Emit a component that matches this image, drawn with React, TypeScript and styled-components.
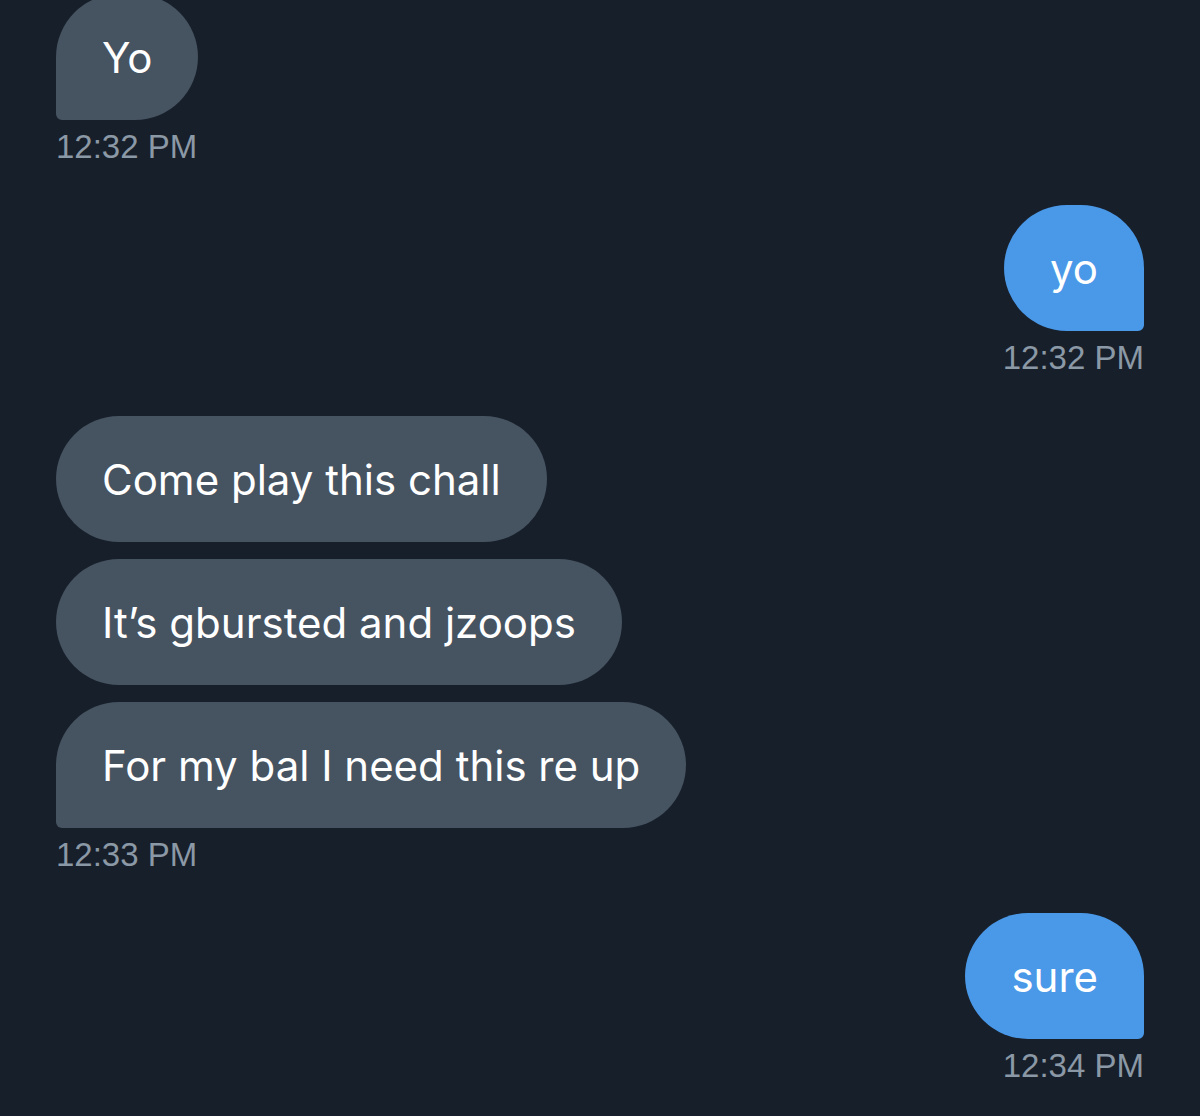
import React from "react";
import styled, { createGlobalStyle } from "styled-components";

const Global = createGlobalStyle`
  html, body { margin: 0; padding: 0; background: #171f2a; }
  body { overflow: hidden; }
`;

const Page = styled.div`
  width: 1200px;
  height: 1116px;
  background: #171f2a;
  overflow: hidden;
  box-sizing: border-box;
  padding: 0 56px;
`;

const Thread = styled.div`
  display: flex;
  flex-direction: column;
  margin-top: -6px;
  gap: 40px;
`;

const Group = styled.div<{ $mine?: boolean }>`
  display: flex;
  flex-direction: column;
  align-items: ${(p) => (p.$mine ? "flex-end" : "flex-start")};
  gap: 17px;
`;

const Bubble = styled.div<{ $mine?: boolean; $tail?: boolean }>`
  box-sizing: border-box;
  height: 126px;
  display: flex;
  align-items: center;
  padding: 0 46px;
  border-radius: 63px;
  ${(p) =>
    p.$tail
      ? p.$mine
        ? "border-bottom-right-radius: 6px;"
        : "border-bottom-left-radius: 6px;"
      : ""}
  background: ${(p) => (p.$mine ? "#4a98e8" : "#465361")};
  color: #ffffff;
  font-family: Inter, "Noto Sans", sans-serif;
  font-size: 42px;
  white-space: nowrap;
`;

const Time = styled.div`
  margin-top: -8px;
  font-family: "Liberation Sans", Arial, sans-serif;
  font-size: 33px;
  line-height: 36px;
  color: #8b98a5;
`;

type Msg = { mine: boolean; texts: string[]; time: string };

const messages: Msg[] = [
  { mine: false, texts: ["Yo"], time: "12:32 PM" },
  { mine: true, texts: ["yo"], time: "12:32 PM" },
  {
    mine: false,
    texts: [
      "Come play this chall",
      "It\u2019s gbursted and jzoops",
      "For my bal I need this re up",
    ],
    time: "12:33 PM",
  },
  { mine: true, texts: ["sure"], time: "12:34 PM" },
];

export default function App() {
  return (
    <>
      <Global />
      <Page>
        <Thread>
          {messages.map((m, i) => (
            <Group key={i} $mine={m.mine}>
              {m.texts.map((t, j) => (
                <Bubble key={j} $mine={m.mine} $tail={j === m.texts.length - 1}>
                  {t}
                </Bubble>
              ))}
              <Time>{m.time}</Time>
            </Group>
          ))}
        </Thread>
      </Page>
    </>
  );
}
